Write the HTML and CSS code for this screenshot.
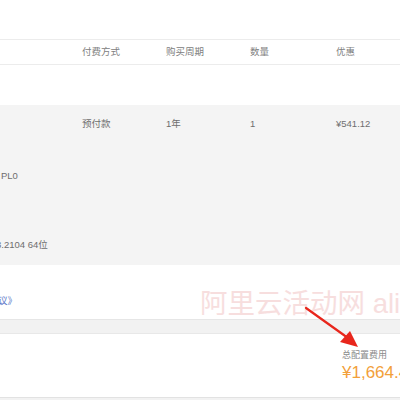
FILE: index.html
```html
<!DOCTYPE html>
<html lang="zh-CN">
<head>
    <meta charset="UTF-8">
    <meta name="viewport" content="width=device-width, initial-scale=1.0">
    <title>确认订单</title>
    <link rel="stylesheet" href="styles.css">
</head>
<body>
    <div class="page">
        <div class="order-card">
            <div class="order-table">
                <div class="row head-row">
                    <div class="cell"></div>
                    <div class="cell">付费方式</div>
                    <div class="cell">购买周期</div>
                    <div class="cell">数量</div>
                    <div class="cell">优惠</div>
                </div>

                <div class="row blank-row"></div>

                <div class="row item-row">
                    <div class="cell spec">
                        <span class="spec-line first">PL0</span>
                        <span class="spec-line second"><span class="cut">3.2104 64位</span></span>
                    </div>
                    <div class="cell">预付款</div>
                    <div class="cell">1年</div>
                    <div class="cell">1</div>
                    <div class="cell">¥541.12</div>
                </div>
            </div>

            <div class="agreement">
                <a href="#" class="agreement-link">议》</a>
            </div>
        </div>

        <div class="summary-card">
            <div class="summary">
                <div class="summary-label">总配置费用</div>
                <div class="summary-price">¥1,664.48</div>
            </div>
        </div>

        <div class="watermark">阿里云活动网 aliyun</div>

        <svg class="arrow" width="70" height="50" viewBox="0 0 70 50">
            <line x1="2" y1="3" x2="44" y2="33" stroke="#e8261c" stroke-width="2.2" stroke-linecap="round"/>
            <polygon points="54,42 36,37 46,26" fill="#e8261c"/>
        </svg>
    </div>
</body>
</html>
```

FILE: styles.css
```css
:root {
    --text-color: #6e6e6e;
    --head-color: #808080;
    --border-color: #ececec;
    --row-bg: #f4f4f4;
    --band-bg: #f2f2f2;
    --link-color: #5b78c8;
    --price-color: #f2a03a;
}

* {
    margin: 0;
    padding: 0;
    box-sizing: border-box;
}

body {
    font-family: 'Liberation Sans', 'Noto Sans CJK SC', sans-serif;
    font-size: 9.5px;
    color: var(--text-color);
    background-color: white;
    overflow: hidden;
}

.page {
    position: relative;
    width: 400px;
    height: 400px;
    overflow: hidden;
    background-color: var(--band-bg);
}

.order-card {
    padding-top: 39px;
    background-color: white;
    border-bottom: 1px solid #e6e6e6;
}

.row {
    display: grid;
    grid-template-columns: 82px 84px 84px 86px 1fr;
    line-height: 14px;
}

.head-row {
    height: 26px;
    align-items: center;
    color: var(--head-color);
    border-top: 1px solid var(--border-color);
    border-bottom: 1px solid var(--border-color);
}

.blank-row {
    height: 40px;
}

.item-row {
    height: 160px;
    padding-top: 12px;
    background-color: var(--row-bg);
}

.cell {
    white-space: nowrap;
}

.spec {
    display: flex;
    flex-direction: column;
    overflow: hidden;
}

.spec-line.first {
    margin-top: 52px;
    padding-left: 1px;
}

.spec-line.second {
    margin-top: 55px;
}

.spec-line .cut {
    margin-left: -4px;
}

.agreement {
    height: 54px;
    padding-top: 29px;
    line-height: 14px;
}

.agreement-link {
    color: var(--link-color);
    text-decoration: none;
    margin-left: -2px;
}

.summary-card {
    margin-top: 13px;
    height: 65px;
    background-color: white;
    border-top: 1px solid #e8e8e8;
    border-bottom: 1px solid #e2e2e2;
}

.summary {
    padding: 15px 0 0 342px;
    white-space: nowrap;
}

.summary-label {
    font-size: 9px;
    line-height: 12px;
    color: #8a8a8a;
}

.summary-price {
    margin-top: 2px;
    font-size: 17px;
    line-height: 20px;
    color: var(--price-color);
}

.watermark {
    position: absolute;
    left: 200px;
    top: 290px;
    font-size: 27.5px;
    line-height: 1;
    color: #f7dede;
    white-space: nowrap;
    pointer-events: none;
}

.arrow {
    position: absolute;
    left: 304px;
    top: 305px;
}
```
